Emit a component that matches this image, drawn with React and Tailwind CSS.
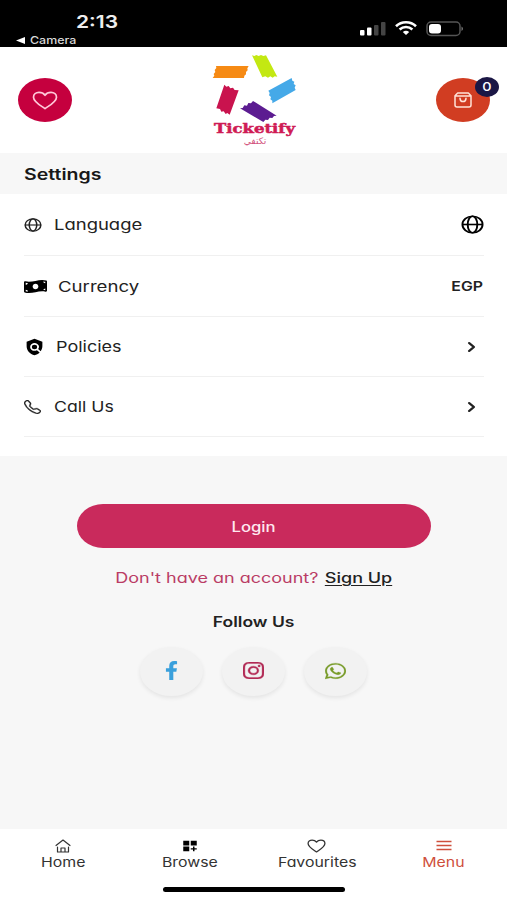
import React from "react";
import { FaFacebookF, FaMoneyBillWave, FaWhatsapp } from "react-icons/fa";
import { MdDashboardCustomize, MdPolicy } from "react-icons/md";
import { BsInstagram, BsTelephone } from "react-icons/bs";
import { FiChevronRight } from "react-icons/fi";

const stretch = { preserveAspectRatio: "none" };

function GlobeIcon({ className }) {
  return (
    <svg viewBox="0 0 24 24" fill="none" stroke="currentColor" strokeWidth="2" className={className} {...stretch}>
      <circle cx="12" cy="12" r="10.5" />
      <ellipse cx="12" cy="12" rx="5" ry="10.5" />
      <path d="M1.5 12h21" />
    </svg>
  );
}

function HeartIcon({ className, strokeWidth }) {
  return (
    <svg viewBox="0 0 26 20" fill="none" stroke="currentColor" strokeWidth={strokeWidth} strokeLinejoin="round" className={className} {...stretch}>
      <path d="M13 18.500C9 15.500 1.500 11.500 1.500 6.500 1.500 3.500 4 1.500 7 1.500c2.800 0 4.800 1.200 6 3 1.200-1.800 3.200-3 6-3 3 0 5.500 2 5.500 5 0 5-7.500 9-11.500 12z" />
    </svg>
  );
}

function HomeIcon() {
  return (
    <svg viewBox="0 0 16 14" fill="none" stroke="currentColor" strokeWidth="1.200" strokeLinecap="round" strokeLinejoin="round" className="h-[14px] w-4">
      <path d="M1 6.500 8 1l7 5.500" />
      <path d="M2.500 8v5h11V8M6 12.800V9h4v3.800" />
    </svg>
  );
}

function BagIcon() {
  return (
    <svg viewBox="0 0 54 48" fill="none" stroke="#ffe3d8" strokeWidth="4.500" strokeLinejoin="round" strokeLinecap="round" className="h-4 w-[18px]" {...stretch}>
      <path d="M11 3h32l8 8v28q0 6-6 6H9q-6 0-6-6V11zM6 12h42M18 19c1 13 17 13 18 0" />
    </svg>
  );
}

function Logo() {
  return (
    <svg viewBox="0 0 330 312" className="ml-[2px] h-[104px] w-[110px]">
      <path fill="#f68a14" d="M48 54 146 54 142 61 143 67 138 72 138 79 133 83 132 90 38 90 43 83 41 78 46 72 44 66 49 60z" />
      <path fill="#c3e812" d="M156 22 163 24 169 21 176 24 183 21 190 24 198 22 232 86 224 85 218 89 211 85 204 89 196 85 187 88z" />
      <path fill="#45a9e8" d="M205 128 275 90 277 98 283 101 281 108 287 112 284 119 287 126 217 166 217 158 211 154 213 147 207 142 209 135z" />
      <path fill="#c9134e" d="M73 110 79 116 86 114 91 121 99 119 104 126 116 127 89 200 82 195 77 198 71 190 64 191 60 183 49 181z" />
      <path fill="#5c1c91" d="M120 181 128 180 133 172 141 173 145 165 153 166 159 159 230 203 222 204 217 210 209 209 204 216 196 215 190 222z" />
      <text x="42" y="254" textLength="243" lengthAdjust="spacingAndGlyphs" fontSize="38" fontWeight="bold" fontFamily="'DejaVu Serif', serif" fill="#cf1b55" stroke="#cf1b55" strokeWidth="1.500">Ticketify</text>
      <text x="165" y="287" textLength="68" lengthAdjust="spacingAndGlyphs" textAnchor="middle" fontSize="27" fontFamily="'DejaVu Sans', sans-serif" fill="#d2527c">تكتفي</text>
    </svg>
  );
}

function StatusBar() {
  return (
    <div className="flex h-[47px] justify-between bg-black text-white [font-feature-settings:normal]">
      <div className="pl-4 pt-[11px]">
        <div className="origin-left scale-x-[1.200] pl-[50px] text-[17.500px] font-semibold leading-[22px] text-[#eee]">2:13</div>
        <div className="mt-[1px] flex items-center gap-[5px] text-[11px] font-medium leading-[12px] text-[#d8d8d8]">
          <svg viewBox="0 0 9 7" className="h-[7px] w-[9px]"><path d="M0 3.500 9 0v7z" fill="#fff" /></svg>
          <span className="origin-left scale-x-[1.130]">Camera</span>
        </div>
      </div>
      <div className="flex items-start gap-[9px] pr-[43px] pt-[21px]">
        <svg viewBox="0 0 26 14" className="mt-[1px] h-[14px] w-[26px]">
          <rect x="0" y="8" width="4.500" height="5.500" rx="1" fill="#fff" />
          <rect x="7" y="5.500" width="4.500" height="8" rx="1" fill="#fff" />
          <rect x="14" y="3" width="4.500" height="10.500" rx="1" fill="#444" />
          <rect x="21" y="0" width="4.500" height="13.500" rx="1" fill="#444" />
        </svg>
        <svg viewBox="0 0 22 14" fill="none" stroke="#fff" strokeWidth="2.600" className="h-[14px] w-[22px]">
          <path d="M1 5.200c5.500-5.200 14.500-5.200 20 0M4.600 8.500c3.700-3.300 9.100-3.300 12.800 0" />
          <path d="M7.800 11c2-1.700 4.400-1.700 6.400 0L11 14z" fill="#fff" stroke="none" />
        </svg>
        <svg viewBox="0 0 38 16" className="h-4 w-[38px]">
          <rect x="1" y="1" width="33" height="13.500" rx="4" fill="none" stroke="#555" strokeWidth="1.500" />
          <rect x="3" y="3" width="12" height="9.500" rx="3" fill="#fff" />
          <path d="M35.500 5.500q3 2.200 0 4.500z" fill="#777" />
        </svg>
      </div>
    </div>
  );
}

function Header() {
  return (
    <header className="flex h-[106px] items-center justify-between bg-white pl-[18px] pr-[17px]">
      <button className="flex h-11 w-[54px] items-center justify-center rounded-[50%] bg-[#c5003e] text-[#ffc9d9]">
        <HeartIcon className="h-[19px] w-[26px]" strokeWidth={1.7} />
      </button>
      <Logo />
      <button className="relative flex h-11 w-[54px] items-center justify-center rounded-[50%] bg-[#d13d22]">
        <BagIcon />
        <span className="absolute -right-[9px] -top-[1px] flex h-5 w-6 items-center justify-center rounded-[50%] bg-[#1b1745] text-[12px] font-medium text-white">
          <span className="scale-x-[1.200]">0</span>
        </span>
      </button>
    </header>
  );
}

function Row({ icon, label, labelClass, className, children }) {
  return (
    <div className={`flex items-center justify-between border-b border-[#f0f0f0] ${className}`}>
      <div className="flex items-center">
        {icon}
        <span className={`origin-left text-[15px] leading-5 ${labelClass}`}>{label}</span>
      </div>
      {children}
    </div>
  );
}

function SettingsList() {
  const arrow = <FiChevronRight {...stretch} strokeWidth={3} className="mr-[3px] h-4 w-[19px]" />;
  return (
    <section className="h-[262px] bg-white pl-6 pr-[23px] text-[#222]">
      <Row className="h-[62px]" icon={<GlobeIcon className="h-[14px] w-[18px]" />} label="Language" labelClass="ml-3 scale-x-[1.230]">
        <GlobeIcon className="h-[19px] w-[23px] text-black" />
      </Row>
      <Row className="h-[61px] pt-px" icon={<FaMoneyBillWave {...stretch} className="h-[15px] w-[23px] text-black" />} label="Currency" labelClass="ml-[11px] scale-x-[1.240]">
        <span className="mr-px origin-right scale-x-[1.220] text-[13px] font-semibold">EGP</span>
      </Row>
      <Row className="h-[60px]" icon={<MdPolicy {...stretch} className="h-[18px] w-[21px] text-black" />} label="Policies" labelClass="ml-[11px] mt-px scale-x-[1.200]">
        {arrow}
      </Row>
      <Row className="h-[60px]" icon={<BsTelephone {...stretch} stroke="currentColor" strokeWidth={0.4} className="h-[14px] w-[17px]" />} label="Call Us" labelClass="ml-[13px] mt-px scale-x-[1.180]">
        {arrow}
      </Row>
    </section>
  );
}

function Social({ children }) {
  return (
    <a className="flex h-[49px] w-[63px] items-center justify-center rounded-[50%] bg-[#f2f2f2] pb-[2px] shadow-[0_2px_4px_rgba(0,0,0,0.08)]">
      {children}
    </a>
  );
}

function Account() {
  return (
    <section className="flex h-[373px] flex-col items-center bg-[#f7f7f7] pt-12 text-[#222]">
      <button className="h-[44px] w-[354px] rounded-[26px/22px] bg-[#c92a5c] text-[14px] font-medium text-[#ffe8f0]">
        <span className="inline-block scale-x-[1.190]">Login</span>
      </button>
      <p className="mt-5 flex scale-x-[1.285] gap-[5px] whitespace-nowrap text-[14px] leading-5">
        <span className="text-[#ba3c65]">Don't have an account?</span>
        <a className="font-medium underline underline-offset-2">Sign Up</a>
      </p>
      <h2 className="mt-6 scale-x-[1.250] text-[14px] font-semibold leading-5">Follow Us</h2>
      <div className="mt-[15px] flex gap-[19px]">
        <Social><FaFacebookF {...stretch} className="h-[19px] w-[13px] text-[#3aa0dc]" /></Social>
        <Social><BsInstagram {...stretch} stroke="currentColor" strokeWidth={0.3} className="h-[17px] w-[21px] text-[#b22a55]" /></Social>
        <Social><FaWhatsapp {...stretch} stroke="currentColor" strokeWidth={6} className="h-[18px] w-[21px] text-[#789b29]" /></Social>
      </div>
    </section>
  );
}

function BottomTabs() {
  return (
    <nav className="h-[71px] bg-white text-[#333]">
      <div className="grid h-[56px] grid-cols-4 pt-[10px] text-[13px]">
        <Tab label="Home" className="text-[#333]"><HomeIcon /></Tab>
        <Tab label="Browse" className="text-[#333]"><MdDashboardCustomize {...stretch} className="h-[14px] w-[18px] text-black" /></Tab>
        <Tab label="Favourites" className="text-[#333]"><HeartIcon className="h-[14px] w-[19px]" strokeWidth={1.8} /></Tab>
        <Tab label="Menu" className="text-[#cf4f3c]">
          <svg viewBox="0 0 16 14" stroke="currentColor" strokeWidth="1.300" className="h-[14px] w-4"><path d="M0.500 2.500h15M0.500 6.500h15M0.500 10.500h15" /></svg>
        </Tab>
      </div>
      <div className="mx-auto mt-[2px] h-[5px] w-[182px] rounded-full bg-black" />
    </nav>
  );
}

function Tab({ label, className, children }) {
  return (
    <a className={`flex flex-col items-center ${className}`}>
      {children}
      <span className="scale-x-[1.220] leading-[18px]">{label}</span>
    </a>
  );
}

export default function App() {
  return (
    <div className="h-[900px] w-[507px] overflow-hidden bg-white font-['Inter',sans-serif] [font-feature-settings:'cv11','ss03']">
      <StatusBar />
      <Header />
      <div className="flex h-[41px] items-center bg-[#f7f7f7] pl-6">
        <h1 className="origin-left scale-x-[1.220] text-[16px] font-semibold text-[#181818]">Settings</h1>
      </div>
      <SettingsList />
      <Account />
      <BottomTabs />
    </div>
  );
}
